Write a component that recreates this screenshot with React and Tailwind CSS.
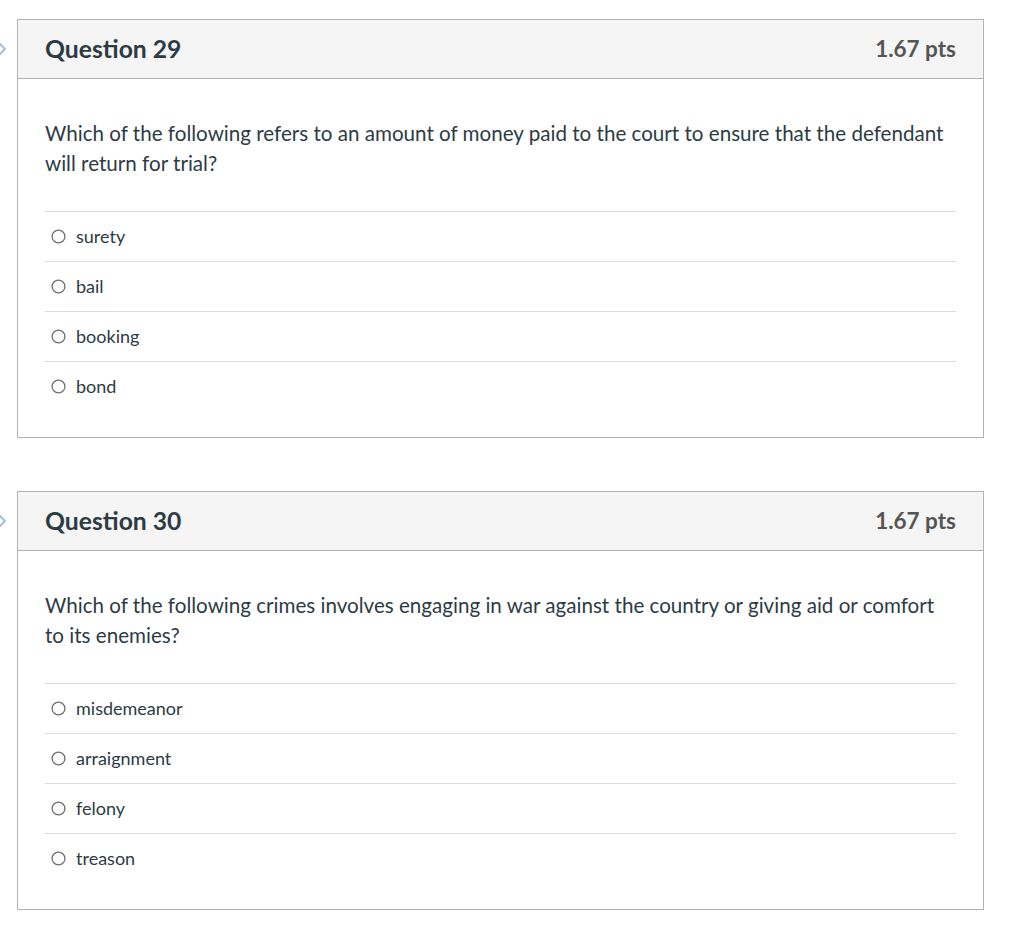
import React from "react";

const questions = [
  {
    title: "Question 29",
    pts: "1.67 pts",
    text: "Which of the following refers to an amount of money paid to the court to ensure that the defendant will return for trial?",
    options: ["surety", "bail", "booking", "bond"],
  },
  {
    title: "Question 30",
    pts: "1.67 pts",
    text: "Which of the following crimes involves engaging in war against the country or giving aid or comfort to its enemies?",
    options: ["misdemeanor", "arraignment", "felony", "treason"],
  },
];

function Chevron() {
  return (
    <svg width="17" height="58" viewBox="0 0 17 58" className="block">
      <polyline
        points="-3,21 5,29 -3,37"
        fill="none"
        stroke="#a9bfd5"
        strokeWidth="2"
        strokeLinejoin="round"
      />
    </svg>
  );
}

function Radio() {
  return (
    <svg width="15" height="15" viewBox="0 0 15 15" className="block shrink-0">
      <circle cx="7.5" cy="7.5" r="6.4" fill="#fff" stroke="#6f6f6f" strokeWidth="1.3" />
    </svg>
  );
}

function Question({ q }) {
  return (
    <div className="flex">
      <div className="w-[17px] shrink-0 pt-[1px]">
        <Chevron />
      </div>
      <div className="w-[967px] border border-[#b3b3b3] bg-white">
        <div className="flex h-[59px] items-center justify-between border-b border-[#b3b3b3] bg-[#f5f5f5] px-[27px]">
          <div className="text-[24.7px] font-bold text-[#2d3b45]">{q.title}</div>
          <div className="text-[22.5px] font-bold text-[#555555]">{q.pts}</div>
        </div>
        <div className="px-[27px] pt-[39px] pb-[26px]">
          <p className="text-[20.6px] leading-[30px] text-[#2d3b45]">{q.text}</p>
          <div className="mt-[33px]">
            {q.options.map((o) => (
              <div key={o} className="flex h-[50px] items-center border-t border-[#dcdcdc] pl-[6px]">
                <Radio />
                <span className="ml-[10px] text-[18px] text-[#2d3b45]">{o}</span>
              </div>
            ))}
          </div>
        </div>
      </div>
    </div>
  );
}

export default function App() {
  return (
    <div
      className="min-h-[946px] bg-white pt-[19px]"
      style={{ fontFamily: "Lato, 'Liberation Sans', sans-serif" }}
    >
      <div className="flex flex-col gap-[53px]">
        {questions.map((q) => (
          <Question key={q.title} q={q} />
        ))}
      </div>
    </div>
  );
}
